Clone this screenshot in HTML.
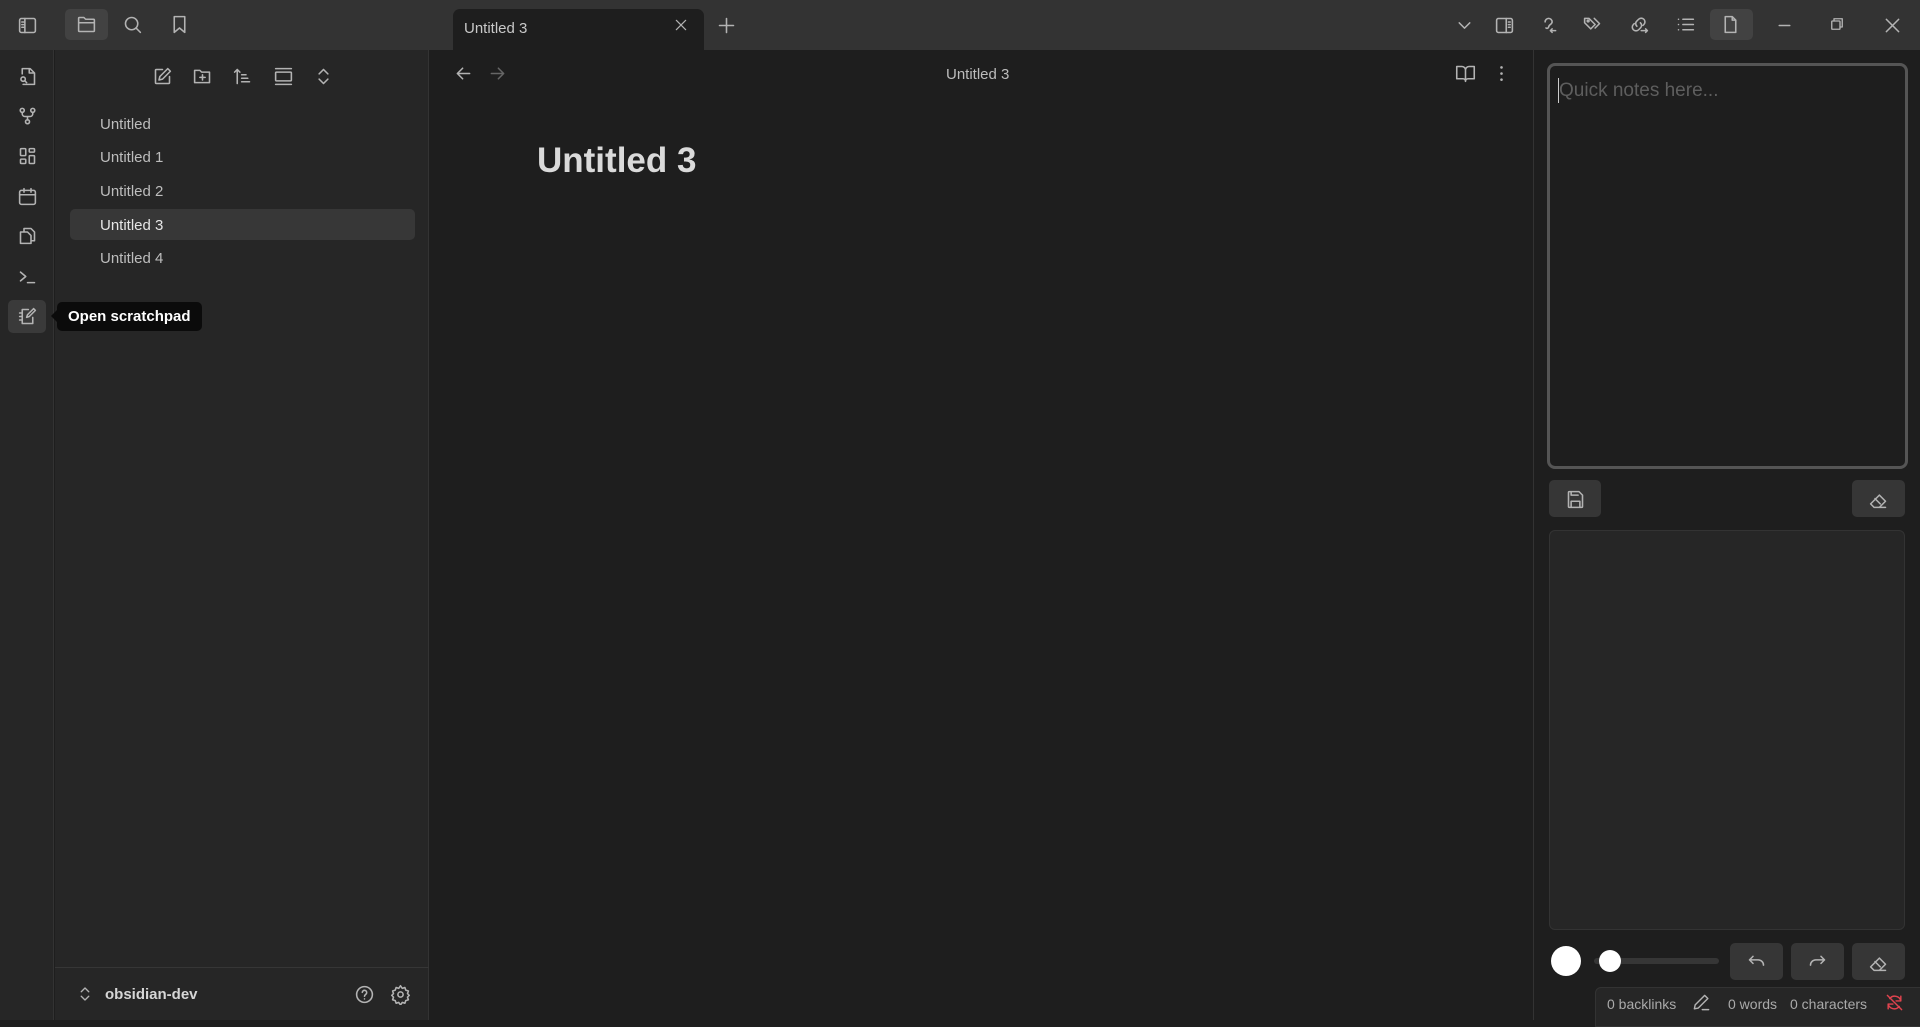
<!DOCTYPE html>
<html><head><meta charset="utf-8">
<style>
*{box-sizing:border-box;margin:0;padding:0}
body{width:1920px;height:1020px;background:#1e1e1e;font-family:"Liberation Sans",sans-serif;color:#dadada;position:relative;overflow:hidden}
.abs{position:absolute}
svg.i{position:absolute;width:21px;height:21px;fill:none;stroke:#b3b3b3;stroke-width:1.8;stroke-linecap:round;stroke-linejoin:round}
.t{position:absolute;white-space:nowrap}
</style></head><body>
<!-- title bar -->
<div class="abs" style="left:0;top:0;width:1920px;height:50px;background:#333333"></div>
<div class="abs" style="left:65px;top:9px;width:43px;height:31px;background:#424242;border-radius:5px"></div>
<div class="abs" style="left:453px;top:9px;width:251px;height:41px;background:#1e1e1e;border-radius:7px 7px 0 0"></div>
<div class="t" style="left:464px;top:20px;font-size:15px;color:#c8c8c8">Untitled 3</div>
<div class="abs" style="left:1710px;top:9px;width:43px;height:31px;background:#424242;border-radius:5px"></div>

<svg class="i" style="left:17px;top:15px" viewBox="0 0 24 24"><rect x="3" y="4" width="18" height="16" rx="2"/><path d="M9 4v16M5.5 8h2M5.5 11h2M5.5 14h2"/></svg>
<svg class="i" style="left:76px;top:14px" viewBox="0 0 24 24"><path d="M3 7V5a1 1 0 0 1 1-1h5l2 2h9a1 1 0 0 1 1 1v12a1 1 0 0 1-1 1H4a1 1 0 0 1-1-1z M3 10h18"/></svg>
<svg class="i" style="left:122px;top:14px" viewBox="0 0 24 24"><circle cx="11" cy="11" r="7"/><path d="M21 21l-5-5"/></svg>
<svg class="i" style="left:169px;top:14px" viewBox="0 0 24 24"><path d="M6 3h12v18l-6-5-6 5z"/></svg>
<svg class="i" style="left:673px;top:17px;width:16px;height:16px" viewBox="0 0 24 24"><path d="M5 5l14 14M19 5L5 19"/></svg>
<svg class="i" style="left:716px;top:15px" viewBox="0 0 24 24"><path d="M12 4v16M4 12h16"/></svg>

<svg class="i" style="left:1454px;top:15px" viewBox="0 0 24 24"><path d="M6 9l6 6 6-6"/></svg>
<svg class="i" style="left:1494px;top:15px" viewBox="0 0 24 24"><rect x="3" y="4" width="18" height="16" rx="2"/><path d="M14 4v16M16.5 8h2M16.5 11h2M16.5 14h2"/></svg>
<svg class="i" style="left:1539px;top:14px" viewBox="0 0 24 24"><path d="M7 9a4 4 0 0 1 8 0c0 3-4 3-4 6a2 2 0 0 1-3 1M13 19h6M15 17l-2 2 2 2"/></svg>
<svg class="i" style="left:1582px;top:14px" viewBox="0 0 24 24"><path d="M3 5v5l7 7 5-5-7-7z M14 5l6 6-5 5"/><circle cx="7" cy="8" r="1"/></svg>
<svg class="i" style="left:1629px;top:14px" viewBox="0 0 24 24"><path d="M9 14a4 4 0 0 1 0-6l2-2a4 4 0 0 1 6 6l-1 1M13 10a4 4 0 0 1 0 6l-2 2a4 4 0 0 1-6-6l1-1M14 19h7M19 17l2 2-2 2"/></svg>
<svg class="i" style="left:1675px;top:14px" viewBox="0 0 24 24"><path d="M9 6h12M9 12h12M9 18h12M4 6h.01M4 12h.01M4 18h.01"/></svg>
<svg class="i" style="left:1720px;top:14px" viewBox="0 0 24 24"><path d="M14 3H6v18h12V7z M14 3v4h4"/></svg>
<svg class="i" style="left:1774px;top:15px" viewBox="0 0 24 24"><path d="M6 12h12"/></svg>
<svg class="i" style="left:1828px;top:15px;width:18px;height:18px" viewBox="0 0 24 24"><rect x="5" y="8" width="11" height="11" rx="1"/><path d="M8 8V5h11v11h-3"/></svg>
<svg class="i" style="left:1882px;top:15px" viewBox="0 0 24 24"><path d="M5 5l14 14M19 5L5 19"/></svg>

<!-- ribbon -->
<div class="abs" style="left:0;top:50px;width:54px;height:970px;background:#262626;border-right:1px solid #333"></div>
<svg class="i" style="left:17px;top:66px" viewBox="0 0 24 24"><path d="M6 9V3h9l5 5v13H7 M14 3v5h6"/><circle cx="7" cy="15" r="2.5"/><path d="M9 17l2 2"/></svg>
<svg class="i" style="left:17px;top:106px" viewBox="0 0 24 24"><circle cx="6" cy="5" r="2.3"/><circle cx="18" cy="5" r="2.3"/><circle cx="12" cy="18" r="2.3"/><path d="M6 7v2a3 3 0 0 0 3 3h6a3 3 0 0 0 3-3V7M12 12v4"/></svg>
<svg class="i" style="left:17px;top:146px" viewBox="0 0 24 24"><rect x="4" y="3" width="6" height="8" rx="1"/><rect x="14" y="3" width="6" height="4" rx="1"/><rect x="4" y="15" width="6" height="5" rx="1"/><rect x="14" y="11" width="6" height="9" rx="1"/></svg>
<svg class="i" style="left:17px;top:186px" viewBox="0 0 24 24"><rect x="3" y="5" width="18" height="16" rx="2"/><path d="M3 10h18M8 3v4M16 3v4"/></svg>
<svg class="i" style="left:17px;top:225px" viewBox="0 0 24 24"><path d="M8 8V4h8l4 4v10h-4 M4 8h8l4 4v9H4z"/></svg>
<svg class="i" style="left:17px;top:266px" viewBox="0 0 24 24"><path d="M4 7l6 5-6 5M12 19h8"/></svg>
<div class="abs" style="left:8px;top:300px;width:38px;height:33px;background:#3a3a3a;border-radius:5px"></div>
<svg class="i" style="left:17px;top:306px" viewBox="0 0 24 24"><path d="M13 4H6v16h12v-7 M3 8h3M3 12h3M3 16h3M19 3l2 2-7 7-3 1 1-3z"/></svg>

<!-- sidebar -->
<div class="abs" style="left:55px;top:50px;width:374px;height:970px;background:#262626;border-right:1px solid #333"></div>
<svg class="i" style="left:152px;top:66px" viewBox="0 0 24 24"><path d="M12 4H5a1 1 0 0 0-1 1v14a1 1 0 0 0 1 1h14a1 1 0 0 0 1-1v-7M18 3l3 3-9 9-4 1 1-4z"/></svg>
<svg class="i" style="left:192px;top:66px" viewBox="0 0 24 24"><path d="M3 6V5h6l2 2h9v12H3z M12 10v6M9 13h6"/></svg>
<svg class="i" style="left:232px;top:66px" viewBox="0 0 24 24"><path d="M6 20V4M3 7l3-3 3 3M11 10h5M11 14h7M11 18h9"/></svg>
<svg class="i" style="left:273px;top:66px" viewBox="0 0 24 24"><path d="M3 3h18M3 21h18"/><rect x="3" y="7" width="18" height="10" rx="1"/></svg>
<svg class="i" style="left:313px;top:66px" viewBox="0 0 24 24"><path d="M7 9l5-5 5 5M7 15l5 5 5-5"/></svg>
<div class="abs" style="left:70px;top:209px;width:345px;height:31px;background:#373737;border-radius:5px"></div>
<div class="t" style="left:100px;top:116px;font-size:15px;color:#bdbdbd">Untitled</div>
<div class="t" style="left:100px;top:149px;font-size:15px;color:#bdbdbd">Untitled 1</div>
<div class="t" style="left:100px;top:183px;font-size:15px;color:#bdbdbd">Untitled 2</div>
<div class="t" style="left:100px;top:217px;font-size:15px;color:#e6e6e6">Untitled 3</div>
<div class="t" style="left:100px;top:250px;font-size:15px;color:#bdbdbd">Untitled 4</div>
<div class="abs" style="left:55px;top:967px;width:374px;height:1px;background:#363636"></div>
<svg class="i" style="left:76px;top:985px;width:18px;height:18px" viewBox="0 0 24 24"><path d="M7 9l5-5 5 5M7 15l5 5 5-5"/></svg>
<div class="t" style="left:105px;top:986px;font-size:15px;font-weight:bold;color:#d6d6d6">obsidian-dev</div>
<svg class="i" style="left:354px;top:984px" viewBox="0 0 24 24"><circle cx="12" cy="12" r="9"/><path d="M9.5 9.5a2.5 2.5 0 0 1 5 .5c0 2-2.5 2-2.5 4M12 17h.01"/></svg>
<svg class="i" style="left:390px;top:984px" viewBox="0 0 24 24"><circle cx="12" cy="12" r="3"/><path d="M12 2l2 3 3-1 1 3 3 1-1 3 2 2-2 2 1 3-3 1-1 3-3-1-2 3-2-3-3 1-1-3-3-1 1-3-2-2 2-2-1-3 3-1 1-3 3 1z"/></svg>

<!-- tooltip -->
<div class="abs" style="left:45px;top:310px;width:0;height:0;border:6px solid transparent;border-right-color:#0b0b0b;z-index:5"></div>
<div class="t" style="left:57px;top:302px;height:29px;padding:0 11px;background:#0b0b0b;border-radius:5px;font-size:15px;font-weight:bold;color:#fff;line-height:29px;z-index:5">Open scratchpad</div>

<!-- editor -->
<svg class="i" style="left:453px;top:63px" viewBox="0 0 24 24"><path d="M19 12H5M11 6l-6 6 6 6"/></svg>
<svg class="i" style="left:487px;top:63px;stroke:#666" viewBox="0 0 24 24"><path d="M5 12h14M13 6l6 6-6 6"/></svg>
<div class="t" style="left:946px;top:66px;font-size:15px;color:#bcbcbc">Untitled 3</div>
<svg class="i" style="left:1455px;top:63px" viewBox="0 0 24 24"><path d="M2 4h6a4 4 0 0 1 4 4v13a3 3 0 0 0-3-3H2z M22 4h-6a4 4 0 0 0-4 4v13a3 3 0 0 1 3-3h7z"/></svg>
<svg class="i" style="left:1491px;top:63px" viewBox="0 0 24 24"><path d="M12 5h.01M12 12h.01M12 19h.01" stroke-width="3"/></svg>
<div class="t" style="left:537px;top:141px;font-size:35px;font-weight:bold;color:#dadada">Untitled 3</div>

<!-- right panel -->
<div class="abs" style="left:1533px;top:50px;width:1px;height:970px;background:#333"></div>
<div class="abs" style="left:1547px;top:63px;width:361px;height:406px;border:3px solid #555;border-radius:8px;background:#1e1e1e"></div>
<div class="abs" style="left:1558px;top:78px;width:1px;height:25px;background:#ccc"></div>
<div class="t" style="left:1559px;top:80px;font-size:19px;color:#5e5e5e">Quick notes here...</div>
<div class="abs" style="left:1549px;top:480px;width:52px;height:37px;background:#363636;border-radius:5px"></div>
<svg class="i" style="left:1565px;top:489px" viewBox="0 0 24 24"><path d="M5 3h11l4 4v13a1 1 0 0 1-1 1H5a1 1 0 0 1-1-1V4a1 1 0 0 1 1-1z M7 21v-7h10v7M7 3v4h8"/></svg>
<div class="abs" style="left:1852px;top:480px;width:53px;height:37px;background:#363636;border-radius:5px"></div>
<svg class="i" style="left:1868px;top:489px" viewBox="0 0 24 24"><path d="M7 21l-4-4 10-10 7 7-7 7z M8 11l6 6M7 21h13"/></svg>
<div class="abs" style="left:1549px;top:530px;width:356px;height:400px;background:#262626;border:1px solid #333;border-radius:6px"></div>
<div class="abs" style="left:1551px;top:946px;width:30px;height:30px;background:#fff;border-radius:50%"></div>
<div class="abs" style="left:1594px;top:958px;width:125px;height:6px;background:#363636;border-radius:3px"></div>
<div class="abs" style="left:1599px;top:950px;width:22px;height:22px;background:#fff;border-radius:50%"></div>
<div class="abs" style="left:1730px;top:943px;width:53px;height:37px;background:#363636;border-radius:5px"></div>
<svg class="i" style="left:1746px;top:952px" viewBox="0 0 24 24"><path d="M4 9h10a6 6 0 0 1 6 6M8 5L4 9l4 4"/></svg>
<div class="abs" style="left:1791px;top:943px;width:53px;height:37px;background:#363636;border-radius:5px"></div>
<svg class="i" style="left:1807px;top:952px" viewBox="0 0 24 24"><path d="M20 9H10a6 6 0 0 0-6 6M16 5l4 4-4 4"/></svg>
<div class="abs" style="left:1852px;top:943px;width:53px;height:37px;background:#363636;border-radius:5px"></div>
<svg class="i" style="left:1868px;top:952px" viewBox="0 0 24 24"><path d="M7 21l-4-4 10-10 7 7-7 7z M8 11l6 6M7 21h13"/></svg>
<!-- status bar -->
<div class="abs" style="left:1595px;top:987px;width:330px;height:40px;background:#262626;border:1px solid #333;border-radius:6px 0 0 0"></div>
<div class="t" style="left:1607px;top:996px;font-size:14px;color:#aaa">0 backlinks</div>
<svg class="i" style="left:1692px;top:993px;width:19px;height:19px" viewBox="0 0 24 24"><path d="M16 3l4 4L8 19l-5 1 1-5z M13 21h8"/></svg>
<div class="t" style="left:1728px;top:996px;font-size:14px;color:#aaa">0 words</div>
<div class="t" style="left:1790px;top:996px;font-size:14px;color:#aaa">0 characters</div>
<svg class="i" style="left:1885px;top:993px;width:19px;height:19px;stroke:#e0434e" viewBox="0 0 24 24"><path d="M3 3l18 18M20 10a8 8 0 0 0-14-3M4 14a8 8 0 0 0 14 3M20 4v6h-6M4 20v-6h6"/></svg>
</body></html>
